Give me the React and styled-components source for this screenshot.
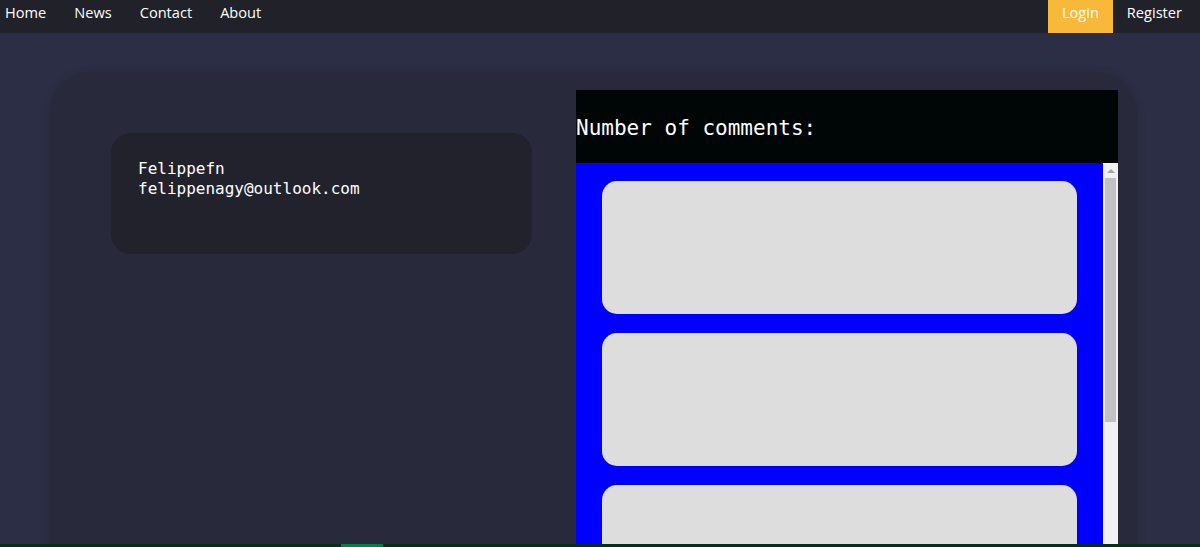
import React from "react";
import styled, { createGlobalStyle } from "styled-components";

const GlobalStyle = createGlobalStyle`
  html, body {
    margin: 0;
    padding: 0;
    height: 100%;
    overflow: hidden;
    background-color: #2c2e45;
  }
  #root {
    height: 100%;
  }
`;

const Page = styled.div`
  height: 100vh;
  display: flex;
  flex-direction: column;
  overflow: hidden;
`;

const NavBar = styled.nav`
  height: 33px;
  flex-shrink: 0;
  background-color: #202129;
  display: flex;
  justify-content: space-between;
  padding: 0 4px 0 5px;
  font-family: "Open Sans", "Noto Sans", sans-serif;
  font-size: 14.6px;
`;

const NavGroup = styled.div`
  display: flex;
  gap: ${(props) => props.gap || 0}px;
`;

const NavLink = styled.a`
  color: #ffffff;
  text-decoration: none;
  line-height: 24px;
  height: 33px;
  padding: 0 ${(props) => (props.button ? 14 : 0)}px;
  background-color: ${(props) => (props.active ? "#f8b83a" : "transparent")};
  cursor: pointer;
`;

const Main = styled.main`
  flex: 1;
  overflow: hidden;
  padding: 39px 63px 0 50px;
`;

const Card = styled.section`
  background-color: #282a3c;
  border-radius: 42px 42px 0 0;
  box-shadow: 0 0 10px rgba(0, 0, 0, 0.15);
  height: 100%;
  display: flex;
  align-items: flex-start;
  gap: 44px;
  padding: 18px 19px 0 61px;
`;

const UserCard = styled.div`
  margin-top: 43px;
  width: 421px;
  height: 121px;
  flex-shrink: 0;
  box-sizing: border-box;
  background-color: #22222d;
  border-radius: 20px;
  padding: 26px 27px;
  color: #ffffff;
  font-family: "DejaVu Sans Mono", "Liberation Mono", monospace;
  font-size: 16px;
  line-height: 20px;
`;

const CommentsPanel = styled.div`
  width: 542px;
  flex-shrink: 0;
`;

const CommentsHeader = styled.div`
  height: 73px;
  box-sizing: border-box;
  padding-top: 2px;
  background-color: #000505;
  color: #ffffff;
  font-family: "DejaVu Sans Mono", "Liberation Mono", monospace;
  font-size: 21px;
  line-height: 73px;
`;

const CommentsBody = styled.div`
  height: 420px;
  display: flex;
  background-color: #0000ff;
`;

const CommentsList = styled.div`
  flex: 1;
  overflow: hidden;
  display: flex;
  flex-direction: column;
  gap: 19px;
  padding: 18px 0 0 26px;
`;

const CommentBox = styled.div`
  width: 475px;
  height: 133px;
  flex-shrink: 0;
  background-color: #dddddd;
  border-radius: 15px;
`;

const ScrollTrack = styled.div`
  width: 15px;
  flex-shrink: 0;
  background-color: #f1f1f1;
  display: flex;
  flex-direction: column;
  align-items: center;
`;

const ScrollArrow = styled.div`
  margin-top: 6px;
  width: 0;
  height: 0;
  border-left: 4px solid transparent;
  border-right: 4px solid transparent;
  border-bottom: 4px solid #a3a3a3;
`;

const ScrollThumb = styled.div`
  margin-top: 5px;
  width: 11px;
  height: 244px;
  background-color: #c1c1c1;
`;

const BottomStrip = styled.div`
  height: 3px;
  flex-shrink: 0;
  background-color: #0a2a1b;
  padding-left: 341px;
`;

const StripMark = styled.div`
  width: 42px;
  height: 100%;
  background-color: #0e7a47;
`;

const comments = [1, 2, 3, 4];

export default function App() {
  return (
    <Page>
      <GlobalStyle />
      <NavBar>
        <NavGroup gap={28}>
          <NavLink>Home</NavLink>
          <NavLink>News</NavLink>
          <NavLink>Contact</NavLink>
          <NavLink>About</NavLink>
        </NavGroup>
        <NavGroup>
          <NavLink button active>
            Login
          </NavLink>
          <NavLink button>Register</NavLink>
        </NavGroup>
      </NavBar>
      <Main>
        <Card>
          <UserCard>
            <div>Felippefn</div>
            <div>felippenagy@outlook.com</div>
          </UserCard>
          <CommentsPanel>
            <CommentsHeader>Number of comments:</CommentsHeader>
            <CommentsBody>
              <CommentsList>
                {comments.map((c) => (
                  <CommentBox key={c} />
                ))}
              </CommentsList>
              <ScrollTrack>
                <ScrollArrow />
                <ScrollThumb />
              </ScrollTrack>
            </CommentsBody>
          </CommentsPanel>
        </Card>
      </Main>
      <BottomStrip>
        <StripMark />
      </BottomStrip>
    </Page>
  );
}
